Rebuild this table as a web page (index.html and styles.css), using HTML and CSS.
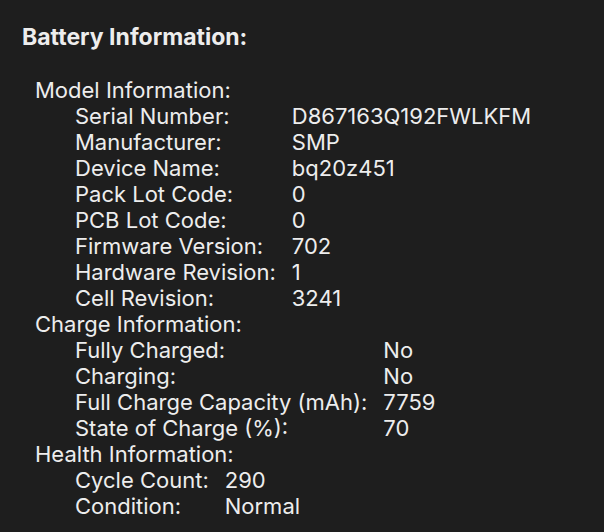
FILE: index.html
```html
<!DOCTYPE html>
<html>
<head>
  <title>Battery Information</title>
  <meta name="viewport" content="width=device-width, initial-scale=1.0">
  <link rel="stylesheet" href="styles.css">
</head>
<body>
  <div class="judul">Battery Information:</div>

  <div class="bagian">
    <div class="bagian-nama">Model Information:</div>
    <div class="daftar">
      <span>Serial Number:</span><span>D867163Q192FWLKFM</span>
      <span>Manufacturer:</span><span>SMP</span>
      <span>Device Name:</span><span>bq20z451</span>
      <span>Pack Lot Code:</span><span>0</span>
      <span>PCB Lot Code:</span><span>0</span>
      <span>Firmware Version:</span><span>702</span>
      <span>Hardware Revision:</span><span>1</span>
      <span>Cell Revision:</span><span>3241</span>
    </div>
  </div>

  <div class="bagian">
    <div class="bagian-nama">Charge Information:</div>
    <div class="daftar">
      <span>Fully Charged:</span><span>No</span>
      <span>Charging:</span><span>No</span>
      <span>Full Charge Capacity (mAh):</span><span>7759</span>
      <span>State of Charge (%):</span><span>70</span>
    </div>
  </div>

  <div class="bagian">
    <div class="bagian-nama">Health Information:</div>
    <div class="daftar">
      <span>Cycle Count:</span><span>290</span>
      <span>Condition:</span><span>Normal</span>
    </div>
  </div>
</body>
</html>
```

FILE: styles.css
```css
body {
  margin: 0;
  padding: 24px 0 0 22px;
  background: #1e1e1e;
  height: 100vh;
  box-sizing: border-box;
  font-family: Inter, "Noto Sans", sans-serif;
  font-size: 22px;
  line-height: 26px;
  color: #ededed;
  overflow: hidden;
}
.judul {
  font-weight: 700;
  font-size: 23px;
  margin-bottom: 27px;
}
.bagian {
  padding-left: 13px;
}
.daftar {
  display: grid;
  grid-template-columns: auto 1fr;
  column-gap: 16px;
  padding-left: 40px;
}
```
